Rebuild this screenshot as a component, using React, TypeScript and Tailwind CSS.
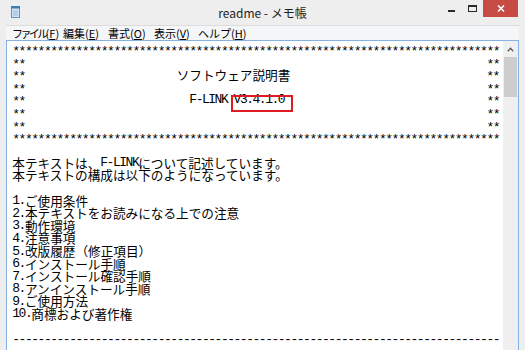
import React from "react";

type RunType = "a" | "s" | "w";

const isWide = (ch: string) => ch.charCodeAt(0) > 0x7f;
const cols = (s: string) => [...s].reduce((n, c) => n + (isWide(c) ? 2 : 1), 0);
const boxed = (mid: string, lead: number) =>
  "**" + " ".repeat(lead) + mid + " ".repeat(73 - lead - cols(mid)) + "**";

function splitRuns(s: string) {
  const out: { t: string; type: RunType }[] = [];
  let cur = "";
  let curType: RunType | null = null;
  for (const ch of s) {
    const type: RunType = isWide(ch) ? "w" : ch === "*" ? "s" : "a";
    if (curType !== null && type !== curType) {
      out.push({ t: cur, type: curType });
      cur = "";
    }
    cur += ch;
    curType = type;
  }
  if (curType !== null && cur) out.push({ t: cur, type: curType });
  return out;
}

function Line({ text, children }: { text: string; children?: React.ReactNode }) {
  return (
    <div className="relative h-[12.6px] whitespace-pre font-['Liberation_Mono',monospace] text-[13px] leading-[12.6px] text-black">
      {splitRuns(text).map((r, i) =>
        r.type === "a" ? (
          <span key={i} className="relative top-[0.5px] tracking-[-1.48px]">
            {r.t}
          </span>
        ) : r.type === "s" ? (
          <span key={i} className="relative top-[2.5px] leading-[0] tracking-[-1.48px]">
            {r.t}
          </span>
        ) : (
          <span
            key={i}
            className="relative top-[2px] font-['Noto_Sans_CJK_JP',sans-serif] text-[12.64px] leading-[0]"
          >
            {r.t}
          </span>
        )
      )}
      {children}
    </div>
  );
}

const lines: string[] = [
  "*".repeat(77),
  boxed("", 0),
  boxed("ソフトウェア説明書", 24),
  boxed("", 0),
  boxed("F-LINK V3.4.1.0", 26),
  boxed("", 0),
  boxed("", 0),
  "*".repeat(77),
  "",
  "本テキストは、F-LINKについて記述しています。",
  "本テキストの構成は以下のようになっています。",
  "",
  "1.ご使用条件",
  "2.本テキストをお読みになる上での注意",
  "3.動作環境",
  "4.注意事項",
  "5.改版履歴（修正項目）",
  "6.インストール手順",
  "7.インストール確認手順",
  "8.アンインストール手順",
  "9.ご使用方法",
  "10.商標および著作権",
  "",
  "-".repeat(77),
];

function NotepadIcon() {
  return (
    <svg width="9" height="12" viewBox="0 0 9 12">
      <rect x="0.5" y="1.5" width="8" height="10" fill="#cfe4f5" stroke="#6b8fb3" />
      <rect x="0" y="0" width="9" height="2.5" fill="#3b7cc0" />
      <line x1="2" y1="5" x2="7" y2="5" stroke="#9ab8d4" />
      <line x1="2" y1="7" x2="7" y2="7" stroke="#9ab8d4" />
      <line x1="2" y1="9" x2="7" y2="9" stroke="#9ab8d4" />
    </svg>
  );
}

function MenuItem({
  label,
  k,
  w,
  tight,
}: {
  label: string;
  k: string;
  w: string;
  tight?: boolean;
}) {
  return (
    <div className={`${w} shrink-0 whitespace-nowrap`}>
      <span className={tight ? "tracking-[-2.6px]" : ""}>{label}</span>(
      <span className="underline underline-offset-[1px]">{k}</span>)
    </div>
  );
}

export default function App() {
  return (
    <div className="w-[525px] h-[350px] overflow-hidden bg-[#eeeeee] flex flex-col">
      {/* Title bar */}
      <div className="h-[25px] grid grid-cols-[1fr_auto_1fr] items-start shrink-0">
        <div className="pl-[11px] pt-[6px]">
          <NotepadIcon />
        </div>
        <div className="pt-[6px] font-['Noto_Sans_CJK_JP',sans-serif] text-[12px] leading-[14px] text-[#1e1e1e]">
          readme - メモ帳
        </div>
        <div className="flex justify-end pr-[7px]">
          <div className="w-[21px] h-[17px] flex justify-center">
            <div className="mt-[10px] w-[7px] h-[2px] bg-[#2a2a2a]" />
          </div>
          <div className="w-[21px] h-[17px] flex justify-center">
            <div className="mt-[5px] w-[9px] h-[7px] border border-t-2 border-[#2a2a2a]" />
          </div>
          <div className="w-[35px] h-[17px] bg-[#c74a43] flex items-center justify-center">
            <svg width="8" height="7" viewBox="0 0 8 7">
              <path d="M1 0.5 L7 6.5 M7 0.5 L1 6.5" stroke="#ffffff" strokeWidth="1.6" />
            </svg>
          </div>
        </div>
      </div>

      {/* Body */}
      <div className="flex-1 flex flex-col px-[6px] min-h-0">
        {/* Menu bar */}
        <div className="h-[15px] shrink-0 border-t border-[#dcdcdc] bg-[#f5f6f8] flex items-center pl-[6px] font-['Noto_Sans_CJK_JP',sans-serif] text-[11px] leading-[14px] text-black">
          <MenuItem label="ファイル" k="F" w="w-[51px]" tight />
          <MenuItem label="編集" k="E" w="w-[45px]" />
          <MenuItem label="書式" k="O" w="w-[46px]" />
          <MenuItem label="表示" k="V" w="w-[44px]" />
          <MenuItem label="ヘルプ" k="H" w="w-[50px]" />
        </div>

        {/* Edit area */}
        <div className="flex-1 min-h-0 flex border border-b-0 border-[#86b2e3] bg-white">
          <div className="flex-1 pl-[5.3px] pt-[2.5px] overflow-hidden">
            {lines.map((t, i) =>
              i === 4 ? (
                <Line key={i} text={t}>
                  <div className="absolute left-[218.4px] top-[1.2px] w-[62.6px] h-[16.7px] border-2 border-[#e01b22]" />
                </Line>
              ) : (
                <Line key={i} text={t} />
              )
            )}
          </div>
          <div className="w-[15px] shrink-0 bg-[#efefef] flex flex-col items-center">
            <div className="h-[16px] w-full flex items-center justify-center">
              <svg width="7" height="5" viewBox="0 0 7 5">
                <path d="M0.8 4.2 L3.5 1.3 L6.2 4.2" fill="none" stroke="#5a5a5a" strokeWidth="1.3" />
              </svg>
            </div>
            <div className="w-[13px] h-[40px] bg-[#cdcdcd]" />
          </div>
        </div>
      </div>
    </div>
  );
}
